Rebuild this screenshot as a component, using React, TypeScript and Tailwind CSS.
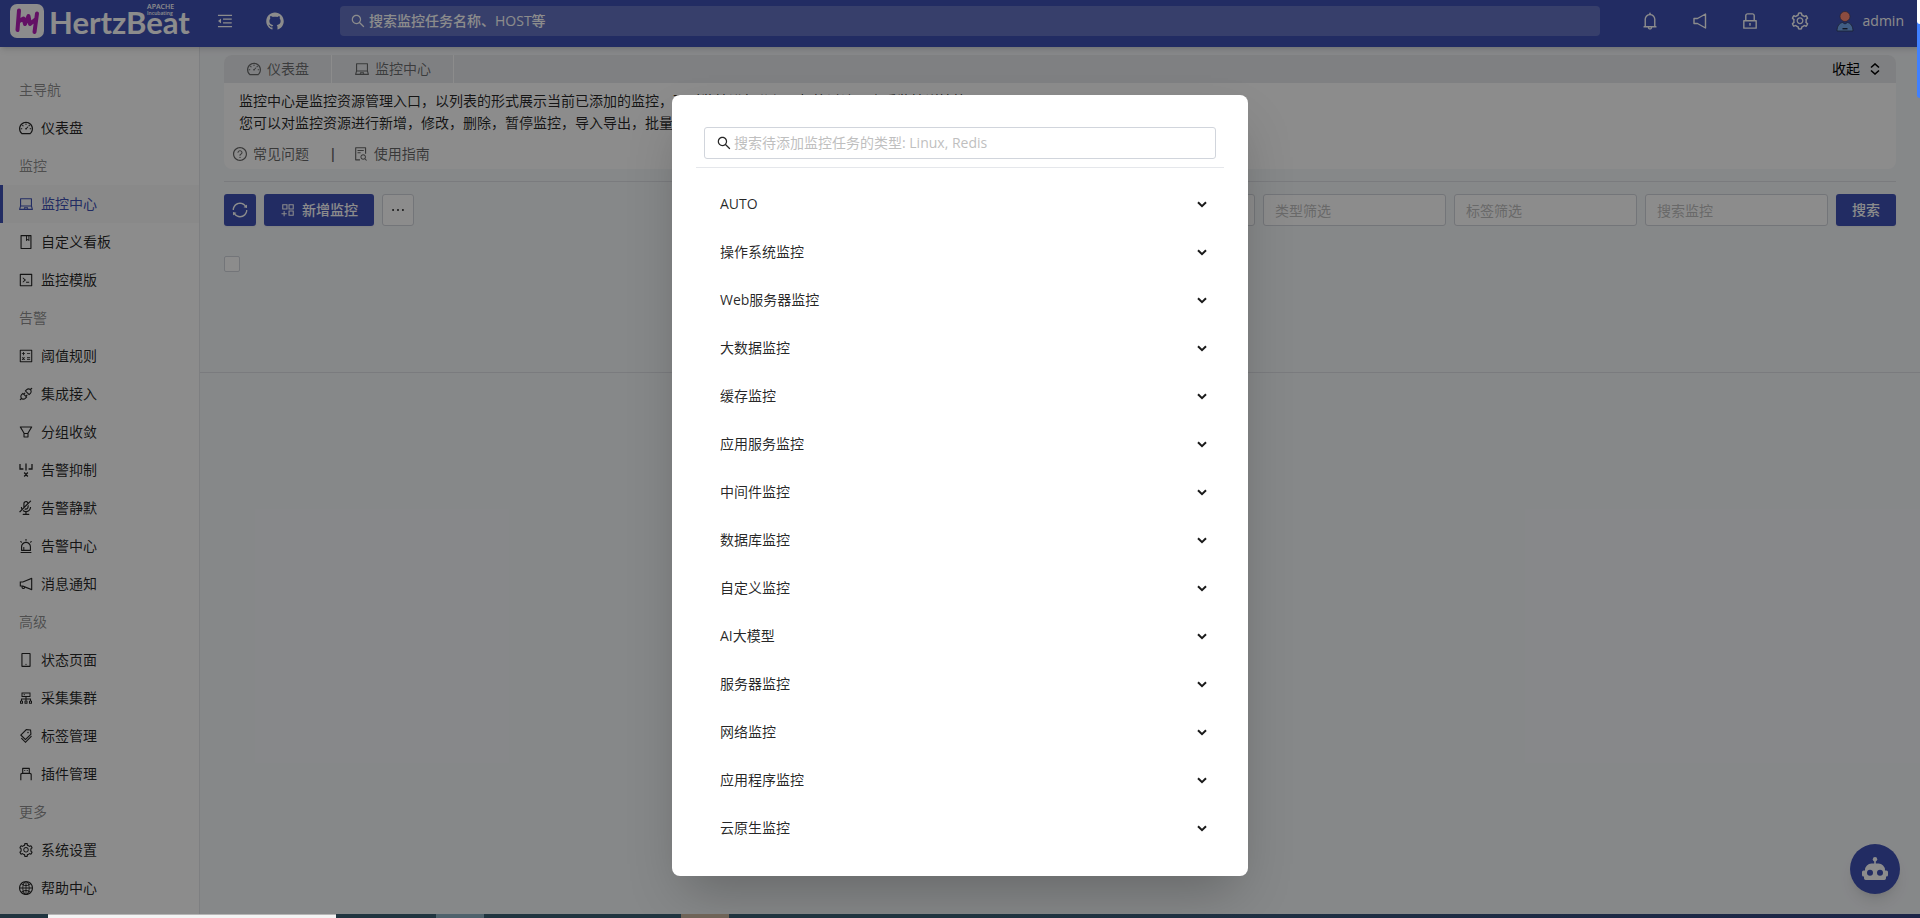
import React, {useState} from 'react';
import {
  AiOutlineAlert,
  AiOutlineApi,
  AiOutlineAppstoreAdd,
  AiOutlineAudioMuted,
  AiOutlineBell,
  AiOutlineBook,
  AiOutlineCalculator,
  AiOutlineCluster,
  AiOutlineCode,
  AiOutlineDashboard,
  AiOutlineEllipsis,
  AiOutlineFileSearch,
  AiOutlineFilter,
  AiOutlineGlobal,
  AiOutlineLaptop,
  AiOutlineLock,
  AiOutlineMenuFold,
  AiOutlineMobile,
  AiOutlineNotification,
  AiOutlineQuestionCircle,
  AiOutlineSearch,
  AiOutlineSetting,
  AiOutlineSync,
  AiOutlineTags,
  AiOutlineUsb,
  AiFillGithub,
} from 'react-icons/ai';

type IconProps = {className?: string};

type NavEntry = {
  label: string;
  icon?: React.ComponentType<IconProps>;
  active?: boolean;
};

function InhibitIcon({className}: IconProps) {
  return (
    <svg
      className={className}
      width="1em"
      height="1em"
      viewBox="0 0 16 16"
      fill="none"
      stroke="currentColor"
      strokeWidth="1.3"
    >
      <path d="M2 2v5h3.400M14 2v5h-3.400M8 1.500v7M6.200 10.500l3.600 4M9.800 10.500l-3.600 4" />
    </svg>
  );
}

function SpeakerIcon({className}: IconProps) {
  return (
    <svg
      className={className}
      width="1em"
      height="1em"
      viewBox="0 0 20 20"
      fill="none"
      stroke="currentColor"
      strokeWidth="1.4"
      strokeLinejoin="round"
    >
      <path d="M4 7.500h3.500L15.500 3v14L7.500 12.500H4z" />
    </svg>
  );
}

function UserAvatar() {
  return (
    <svg width="18" height="22" viewBox="0 0 18 22" aria-hidden="true">
      <path
        d="M1 21c0-5 2.500-8 5.500-8.500L9 14l2.500-1.500C14.500 13 17 16 17 21z"
        fill="#76a9f0"
        stroke="#2f3a55"
        strokeWidth=".8"
      />
      <circle cx="9" cy="6.500" r="5" fill="#ff8a75" stroke="#3a3a4a" strokeWidth=".6" />
      <path d="M6.500 18h5v1.400h-5z" fill="#1f2a44" />
    </svg>
  );
}

function RobotIcon() {
  return (
    <svg width="26" height="24" viewBox="0 0 26 24" fill="#fff" aria-hidden="true">
      <circle cx="13" cy="2.200" r="2.200" />
      <path d="M12.200 3h1.600v5h-1.600z" />
      <path
        fillRule="evenodd"
        d="M9.500 6.500h7A6.500 6.500 0 0 1 23 13v.5h1.500q1.500 0 1.500 1.500v3q0 1.500-1.500 1.500H24v1.800q0 1.700-1.700 1.700H3.700Q2 23 2 21.300v-1.800h-.5Q0 19.500 0 18v-3q0-1.500 1.500-1.500H3V13a6.500 6.500 0 0 1 6.500-6.500zM8 12.800a3 3 0 1 0 0 6 3 3 0 0 0 0-6zM18 12.800a3 3 0 1 0 0 6 3 3 0 0 0 0-6z"
      />
    </svg>
  );
}

function ChevronIcon() {
  return (
    <svg width="10" height="7" viewBox="0 0 10 7" fill="none" stroke="#1a1a1a" strokeWidth="2">
      <path d="M1 1.200 5 5.200 9 1.200" />
    </svg>
  );
}

function Logo() {
  return (
    <a href="#home" className="relative flex h-9 w-[188px] items-center gap-[5px] text-white">
      <svg width="34" height="34" viewBox="0 0 34 34" aria-hidden="true">
        <rect width="34" height="34" rx="7" fill="#fff" />
        <path
          d="M9 6.500 7.500 26M8.500 17.500l5-3 1.500 5.500 3.500-8 1.500 8 5.500-4.500M27 9.500 24.500 28"
          fill="none"
          stroke="#b41fb8"
          strokeWidth="4"
          strokeLinecap="round"
          strokeLinejoin="round"
        />
      </svg>
      <span className="pt-[3px] font-['Lato',sans-serif] text-[31px] leading-6 font-bold">
        HertzBeat
      </span>
      <span className="absolute top-0 left-[137px] flex flex-col text-[7px] leading-[7px] font-semibold">
        <span>APACHE</span>
        <span className="text-[5px]">Incubating</span>
      </span>
    </a>
  );
}

const navEntries: NavEntry[] = [
  {label: '主导航'},
  {label: '仪表盘', icon: AiOutlineDashboard},
  {label: '监控'},
  {label: '监控中心', icon: AiOutlineLaptop, active: true},
  {label: '自定义看板', icon: AiOutlineBook},
  {label: '监控模版', icon: AiOutlineCode},
  {label: '告警'},
  {label: '阈值规则', icon: AiOutlineCalculator},
  {label: '集成接入', icon: AiOutlineApi},
  {label: '分组收敛', icon: AiOutlineFilter},
  {label: '告警抑制', icon: InhibitIcon},
  {label: '告警静默', icon: AiOutlineAudioMuted},
  {label: '告警中心', icon: AiOutlineAlert},
  {label: '消息通知', icon: AiOutlineNotification},
  {label: '高级'},
  {label: '状态页面', icon: AiOutlineMobile},
  {label: '采集集群', icon: AiOutlineCluster},
  {label: '标签管理', icon: AiOutlineTags},
  {label: '插件管理', icon: AiOutlineUsb},
  {label: '更多'},
  {label: '系统设置', icon: AiOutlineSetting},
  {label: '帮助中心', icon: AiOutlineGlobal},
];

const categories = [
  'AUTO',
  '操作系统监控',
  'Web服务器监控',
  '大数据监控',
  '缓存监控',
  '应用服务监控',
  '中间件监控',
  '数据库监控',
  '自定义监控',
  'AI大模型',
  '服务器监控',
  '网络监控',
  '应用程序监控',
  '云原生监控',
];

function Header() {
  const buttons = [
    {label: '通知', icon: AiOutlineBell},
    {label: '静音', icon: SpeakerIcon},
    {label: '锁屏', icon: AiOutlineLock},
    {label: '设置', icon: AiOutlineSetting},
  ];
  return (
    <header className="relative z-10 flex h-[47px] shrink-0 items-center bg-[#3f51b5] pr-4 pb-[6px] pl-[10px] text-white shadow-md">
      <Logo />
      <button className="ml-[18px] text-lg" aria-label="折叠菜单">
        <AiOutlineMenuFold />
      </button>
      <a href="#github" className="ml-[31px] text-xl" aria-label="GitHub">
        <AiFillGithub />
      </a>
      <label className="ml-[55px] flex h-[30px] flex-1 items-center gap-[3px] rounded bg-[#6574c4] px-[10px]">
        <AiOutlineSearch className="text-base" />
        <input
          className="min-w-0 flex-1 font-medium outline-none placeholder:text-white"
          placeholder="搜索监控任务名称、HOST等"
          aria-label="搜索监控任务"
        />
      </label>
      <div className="ml-10 flex items-center gap-[30px]">
        {buttons.map(({label, icon: Icon}) => (
          <button key={label} aria-label={label} className="text-xl">
            <Icon />
          </button>
        ))}
      </div>
      <button className="ml-[26px] flex items-center gap-[9px]">
        <UserAvatar />
        admin
      </button>
    </header>
  );
}

function Sidebar() {
  return (
    <nav className="w-[200px] shrink-0 border-r border-gray-200 bg-white pt-6">
      {navEntries.map(({label, icon: Icon, active}) =>
        Icon ? (
          <a
            key={label}
            href={`#${label}`}
            className={
              active
                ? 'flex h-[38px] items-center gap-[7px] border-l-3 border-[#3f51b5] bg-[#fafafa] pl-[15px] text-[#3f51b5]'
                : 'flex h-[38px] items-center gap-[7px] pl-[18px]'
            }
          >
            <Icon className="text-base" />
            {label}
          </a>
        ) : (
          <div key={label} className="flex h-[38px] items-center pl-[19px] text-black/45">
            {label}
          </div>
        )
      )}
    </nav>
  );
}

function IntroCard() {
  return (
    <section className="overflow-hidden rounded-lg bg-white">
      <div className="flex h-7 items-center bg-[#e8eaed] pr-4 text-black/55">
        <a
          href="#dashboard"
          className="flex h-full items-center gap-[5px] border-r border-white px-[22px]"
        >
          <AiOutlineDashboard className="text-base" /> 仪表盘
        </a>
        <a
          href="#monitors"
          className="flex h-full items-center gap-[5px] border-r border-white px-[22px]"
        >
          <AiOutlineLaptop className="text-base" /> 监控中心
        </a>
        <button className="ml-auto flex items-center gap-[10px] text-black">
          收起
          <svg width="10" height="12" viewBox="0 0 10 12" fill="none" stroke="currentColor" strokeWidth="1.6">
            <path d="M1 4.500 5 1 9 4.500M1 7.500 5 11 9 7.500" />
          </svg>
        </button>
      </div>
      <p className="px-[15px] pt-[7px]">
        监控中心是监控资源管理入口，以列表的形式展示当前已添加的监控，可对监控进行分组，标签过滤，查看监控详情等。
        <br />
        您可以对监控资源进行新增，修改，删除，暂停监控，导入导出，批量管理等操作。
      </p>
      <div className="flex items-center px-2 pt-[9px] pb-1 text-black/60">
        <a href="#faq" className="flex items-center gap-[5px]">
          <AiOutlineQuestionCircle className="text-base" /> 常见问题
        </a>
        <span className="mr-4 ml-5 font-bold">|</span>
        <a href="#guide" className="flex items-center gap-[5px]">
          <AiOutlineFileSearch className="text-base" /> 使用指南
        </a>
      </div>
    </section>
  );
}

function Toolbar() {
  const filters = ['状态筛选', '类型筛选', '标签筛选', '搜索监控'];
  return (
    <div className="flex gap-2">
      <button
        className="flex h-8 w-8 items-center justify-center rounded-[3px] bg-[#3f51b5] text-lg text-white shadow-xs"
        aria-label="刷新"
      >
        <AiOutlineSync />
      </button>
      <button className="flex h-8 items-center gap-[6px] rounded-[3px] bg-[#3f51b5] px-4 font-medium text-white shadow-xs">
        <AiOutlineAppstoreAdd className="text-base" /> 新增监控
      </button>
      <button
        className="flex h-8 w-8 items-center justify-center rounded-[3px] border border-gray-300 bg-white text-lg"
        aria-label="更多操作"
      >
        <AiOutlineEllipsis />
      </button>
      <div className="ml-auto flex gap-2">
        {filters.map((text) => (
          <input
            key={text}
            className="h-8 w-[183px] rounded-[3px] border border-gray-300 bg-white px-[11px] placeholder:text-[#bfbfbf]"
            placeholder={text}
            aria-label={text}
          />
        ))}
        <button className="h-8 rounded-[3px] bg-[#3f51b5] px-4 font-medium text-white shadow-xs">
          搜索
        </button>
      </div>
    </div>
  );
}

function MonitorTypeDialog() {
  const [keyword, setKeyword] = useState('');
  return (
    <div
      role="dialog"
      aria-label="新增监控"
      className="w-[576px] rounded-lg bg-white px-6 pt-8 pb-6 shadow-2xl"
    >
      <div className="border-b border-gray-200 px-2 pb-2">
        <label className="flex h-8 items-center gap-[2px] rounded-[3px] border border-gray-300 px-[11px]">
          <AiOutlineSearch className="text-base" />
          <input
            className="flex-1 outline-none placeholder:text-[#bfbfbf]"
            placeholder="搜索待添加监控任务的类型: Linux, Redis"
            aria-label="监控类型"
            value={keyword}
            onChange={(e) => setKeyword(e.target.value)}
          />
        </label>
      </div>
      <div className="pt-3">
        {categories.map((name) => (
          <button
            key={name}
            className="flex h-12 w-full items-center justify-between pr-[17px] pl-6"
          >
            {name}
            <ChevronIcon />
          </button>
        ))}
      </div>
    </div>
  );
}

export default function App() {
  return (
    <div className="relative flex h-screen flex-col overflow-hidden bg-[#f5f7fa] font-['Open_Sans','Noto_Sans_CJK_SC',sans-serif] text-sm leading-[22px] text-black/85">
      <Header />
      <div className="flex min-h-0 flex-1">
        <Sidebar />
        <main className="min-w-0 flex-1">
          <div className="border-b border-[#dfe1e5] px-6 pt-2 pb-[100px]">
            <IntroCard />
            <div className="my-3 border-t border-[#dfe1e5]"></div>
            <Toolbar />
            <input
              type="checkbox"
              aria-label="全选"
              className="mt-[30px] block h-4 w-4 appearance-none rounded-xs border border-gray-300 bg-white"
            />
          </div>
        </main>
      </div>

      <button
        className="absolute right-5 bottom-6 flex h-[50px] w-[50px] items-center justify-center rounded-full bg-[#3f51b5] shadow-lg"
        aria-label="智能助手"
      >
        <RobotIcon />
      </button>

      <div className="absolute inset-0 z-20 flex items-start justify-center bg-black/45 pt-[95px]">
        <MonitorTypeDialog />
      </div>

      <div className="absolute top-0 right-0 z-30 h-[98px] w-[3px] rounded-l bg-[#4080ff]">
        <div className="h-6 rounded-bl bg-white"></div>
      </div>

      <div className="absolute inset-x-0 bottom-0 z-30 flex h-1 bg-linear-to-r from-[#20343f] via-[#20343f] to-[#1c2447]">
        <div className="ml-12 w-72 border-t border-[#b5b5b5] bg-[#f3f3f3]"></div>
        <div className="ml-[100px] w-12 bg-[#4f626c]"></div>
        <div className="ml-[197px] w-12 bg-[#6f6458]"></div>
      </div>
    </div>
  );
}
